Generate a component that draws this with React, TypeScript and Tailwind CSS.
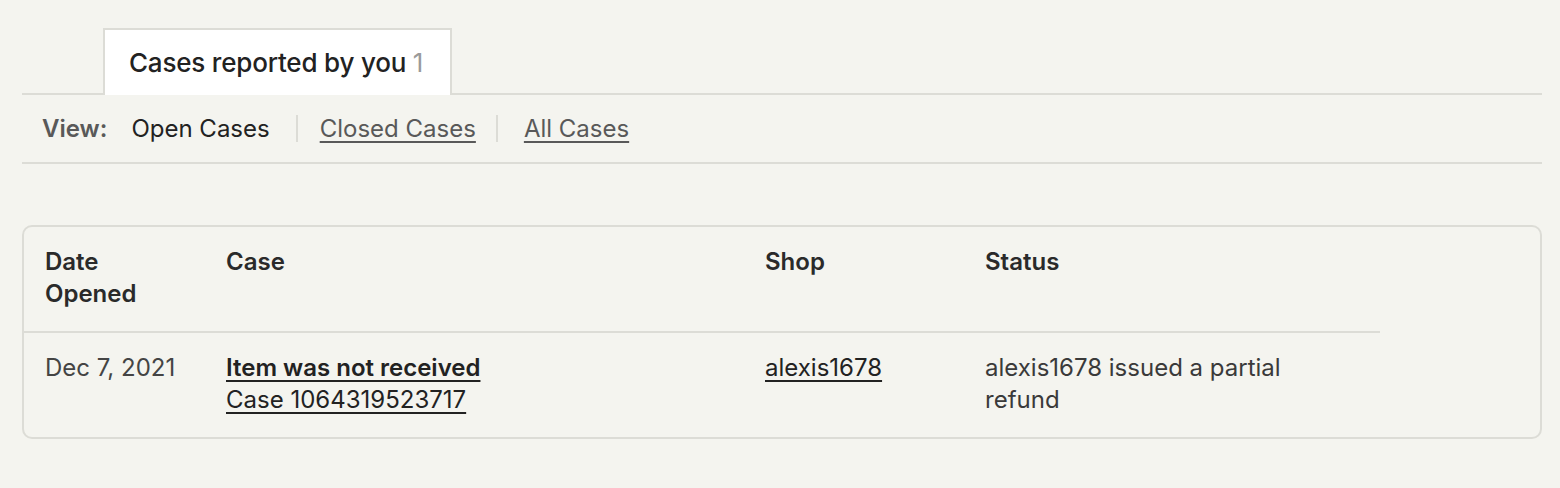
export default function App() {
  return (
    <div
      className="min-h-[488px] w-[1560px] bg-[#f4f4ef] pt-[28px] text-[#222222]"
      style={{ fontFamily: "Inter, 'Liberation Sans', sans-serif" }}
    >
      <div className="ml-[22px] w-[1520px]">
        {/* tabs */}
        <div className="flex border-b-2 border-[#dcdcd6] pl-[81px]">
          <div className="-mb-[2px] flex h-[67px] items-center border-2 border-b-0 border-[#dcdcd6] bg-white pl-[24px] pr-[27px]">
            <span className="text-[26px] font-medium tracking-[-0.2px]">
              Cases reported by you{" "}
              <span className="font-normal text-[#9a9a9a]">1</span>
            </span>
          </div>
        </div>

        {/* view filter */}
        <div className="flex h-[69px] items-center border-b-2 border-[#dcdcd6] pl-[20px] text-[24px]">
          <span className="mr-[24px] font-semibold text-[#595959]">View:</span>
          <span className="text-[#222222]">Open Cases</span>
          <span className="ml-[26px] mr-[22px] h-[27px] w-[2px] bg-[#dcdcd6]" />
          <a href="#" className="text-[#595959] underline underline-offset-4">
            Closed Cases
          </a>
          <span className="ml-[20px] mr-[26px] h-[27px] w-[2px] bg-[#dcdcd6]" />
          <a href="#" className="text-[#595959] underline underline-offset-4">
            All Cases
          </a>
        </div>

        {/* table card */}
        <div className="mt-[61px] h-[214px] rounded-[10px] border-2 border-[#dcdcd6]">
          <div className="w-[1356px] text-[24px] leading-[32px]">
            <div className="grid grid-cols-[202px_539px_220px_395px] border-b-2 border-[#dcdcd6] pb-[21px] pt-[19px] font-semibold text-[#2a2a2a]">
              <div className="pl-[21px]">
                Date
                <br />
                Opened
              </div>
              <div>Case</div>
              <div>Shop</div>
              <div>Status</div>
            </div>
            <div className="grid grid-cols-[202px_539px_220px_395px] pt-[19px]">
              <div className="pl-[21px] text-[#444444]">Dec 7, 2021</div>
              <div className="flex flex-col items-start">
                <a href="#" className="font-semibold underline underline-offset-4">
                  Item was not received
                </a>
                <a href="#" className="underline underline-offset-4">
                  Case 1064319523717
                </a>
              </div>
              <div>
                <a href="#" className="underline underline-offset-4">
                  alexis1678
                </a>
              </div>
              <div className="max-w-[320px] text-[#3a3a3a]">
                alexis1678 issued a partial refund
              </div>
            </div>
          </div>
        </div>
      </div>
    </div>
  );
}
